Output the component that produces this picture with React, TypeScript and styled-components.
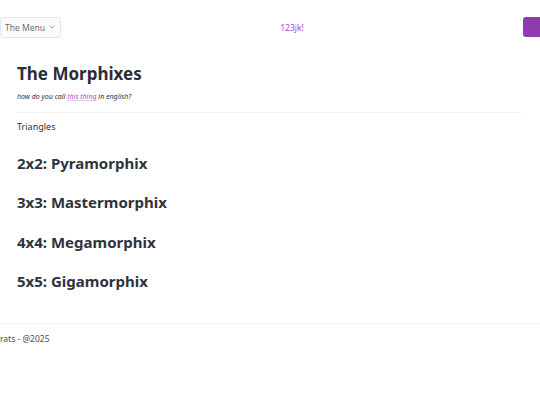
import React from "react";
import styled, { createGlobalStyle } from "styled-components";

const Global = createGlobalStyle`
  html, body { margin: 0; padding: 0; background: #fff; }
  body { font-family: "Noto Sans", "Open Sans", sans-serif; color: #2d3039; }
`;

const Page = styled.div`
  width: 540px;
  display: flex;
  flex-direction: column;
`;

const Header = styled.header`
  display: flex;
  align-items: center;
  justify-content: space-between;
  height: 54px;
`;

const MenuButton = styled.button`
  display: flex;
  align-items: center;
  gap: 4px;
  height: 21px;
  padding: 0 5px 0 4px;
  border: 1px solid #e6e6e9;
  border-radius: 3px;
  background: #fbfbfc;
  font-family: inherit;
  font-size: 8.5px;
  color: #6b6f7a;
`;

const Brand = styled.span`
  font-size: 8.5px;
  color: #a64fc4;
`;

const SquareButton = styled.div`
  width: 17px;
  height: 20px;
  background: #8e3bb0;
  border-radius: 3px 0 0 3px;
`;

const Main = styled.main`
  padding: 8px 18px 0 17px;
  min-height: 261px;
`;

const Title = styled.h1`
  margin: 0;
  font-size: 17px;
  font-weight: 700;
  line-height: 24px;
  color: #2a2d35;
`;

const Subtitle = styled.p`
  margin: 6px 0 0;
  font-size: 7px;
  font-style: italic;
  color: #2d3039;
  line-height: 10px;
`;

const Link = styled.a`
  color: #a64fc4;
  text-decoration: underline;
  text-decoration-color: #e3c6ee;
`;

const Divider = styled.hr`
  margin: 10px 0 0;
  border: none;
  border-top: 1px solid #f3f3f4;
`;

const Section = styled.p`
  margin: 8px 0 0;
  font-size: 9px;
  line-height: 12px;
  color: #2d3039;
`;

const ItemHeading = styled.h2<{ $first?: boolean }>`
  margin: ${(p) => (p.$first ? "20px" : "19.3px")} 0 0;
  font-size: 15px;
  font-weight: 700;
  line-height: 20px;
  color: #30333c;
`;

const Footer = styled.footer`
  border-top: 1px solid #f1f1f3;
  padding: 9px 0;
  font-size: 8.5px;
  color: #4a4d57;
`;

export default function App() {
  return (
    <>
      <Global />
      <Page>
        <Header>
          <MenuButton>
            The Menu
            <svg width="6" height="4" viewBox="0 0 6 4">
              <path d="M0.5 0.8 L3 3.2 L5.5 0.8" fill="none" stroke="#8a8d96" strokeWidth="0.8" />
            </svg>
          </MenuButton>
          <Brand>123jk!</Brand>
          <SquareButton />
        </Header>
        <Main>
          <Title>The Morphixes</Title>
          <Subtitle>
            how do you call <Link>this thing</Link> in english?
          </Subtitle>
          <Divider />
          <Section>Triangles</Section>
          <ItemHeading $first>2x2: Pyramorphix</ItemHeading>
          <ItemHeading>3x3: Mastermorphix</ItemHeading>
          <ItemHeading>4x4: Megamorphix</ItemHeading>
          <ItemHeading>5x5: Gigamorphix</ItemHeading>
        </Main>
        <Footer>rats - @2025</Footer>
      </Page>
    </>
  );
}
